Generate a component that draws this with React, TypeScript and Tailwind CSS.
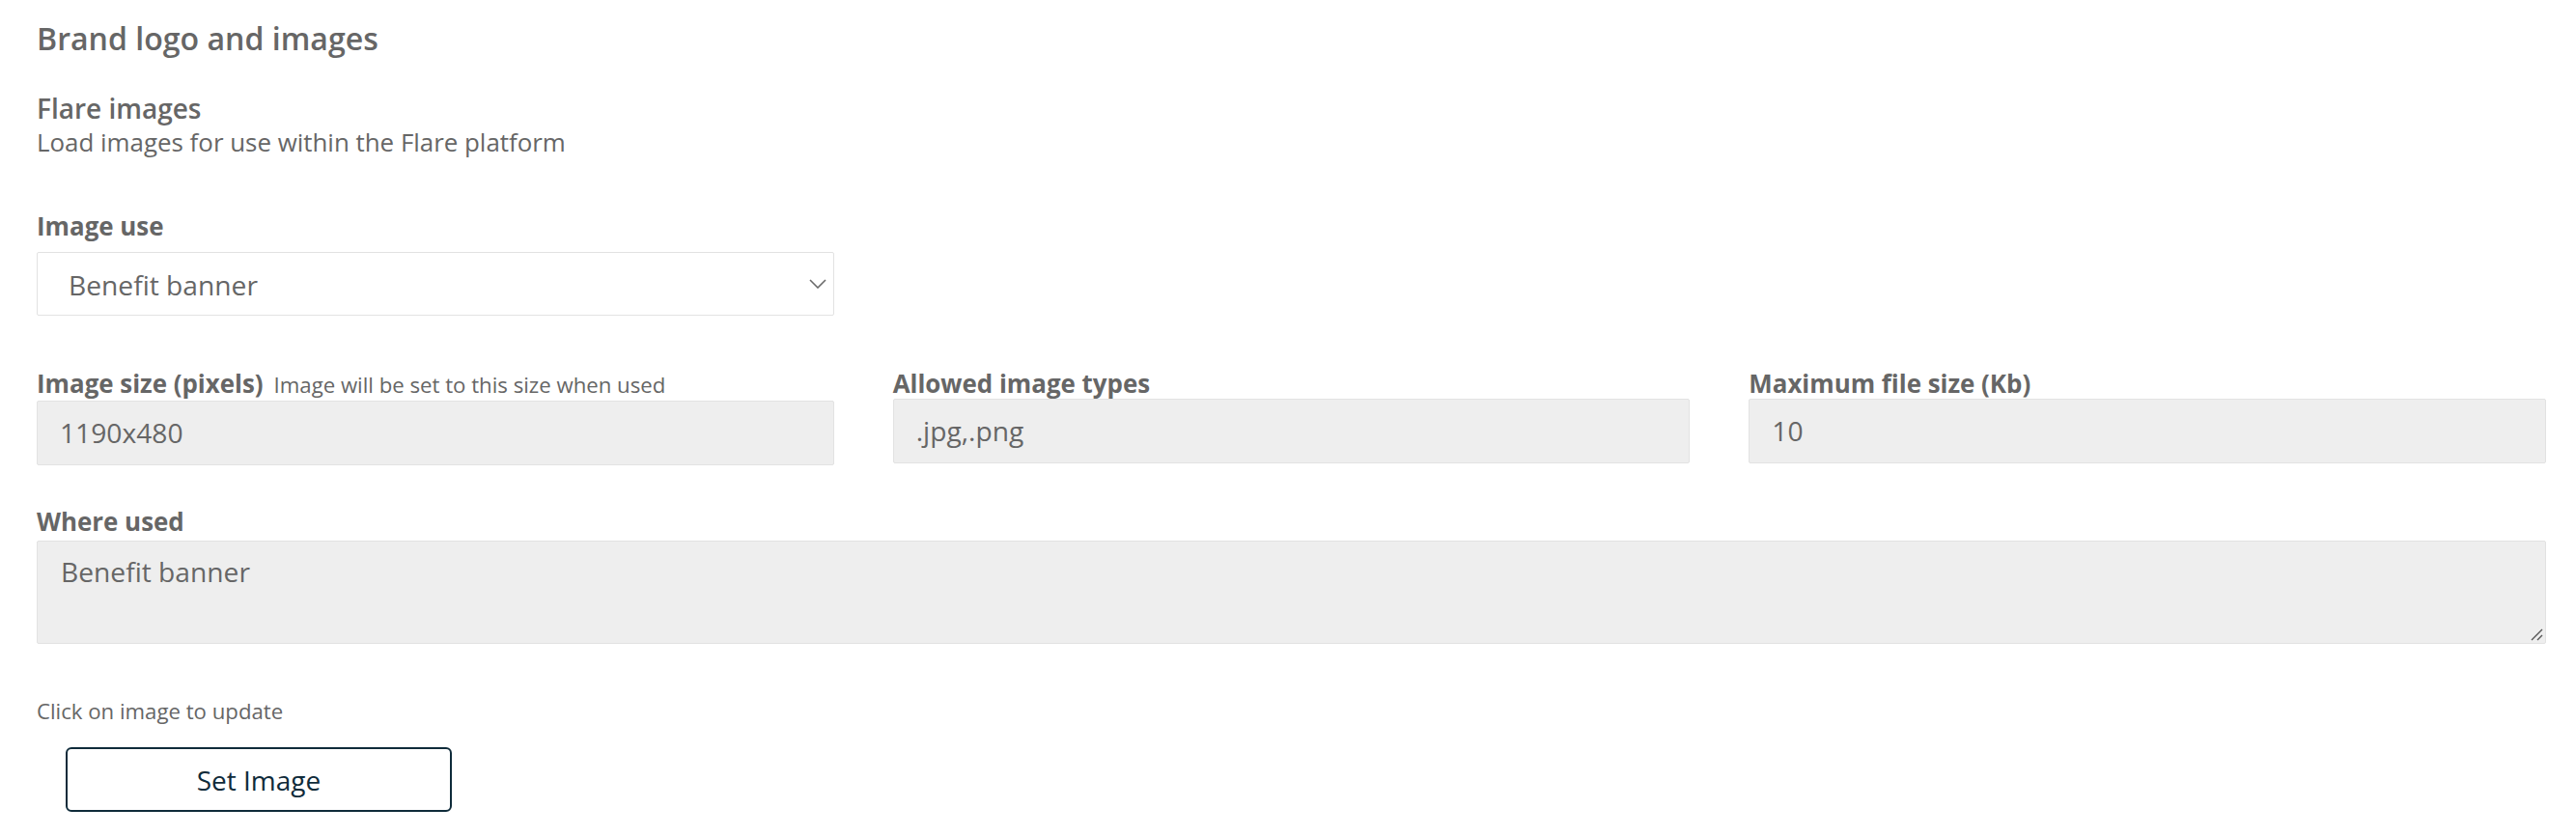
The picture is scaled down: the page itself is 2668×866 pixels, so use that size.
import React from "react";

const font = { fontFamily: '"Open Sans", "Noto Sans", sans-serif' };

function Field({ label, value, extra }: { label: string; value: string; extra?: string }) {
  return (
    <div className="flex flex-col">
      <div className="flex items-baseline leading-[32px]">
        <span className="text-[25.9px] font-bold text-[#666666]">{label}</span>
        {extra && <span className="ml-[11px] text-[22.2px] text-[#666666]">{extra}</span>}
      </div>
      <div className="h-[67px] rounded-[2px] border border-[#e2e2e2] bg-[#eeeeee] pl-[23px] pt-[14px]">
        <div className="text-[28.2px] leading-[37px] text-[#666666]">{value}</div>
      </div>
    </div>
  );
}

export default function App() {
  return (
    <div className="min-h-[866px] w-full bg-white" style={font}>
      <div className="flex flex-col pl-[38px] pr-[31px] pt-[19px]">
        <h1 className="text-[32.1px] font-semibold leading-[42px] text-[#666666]">Brand logo and images</h1>
        <h2 className="mt-[33px] text-[28px] font-semibold leading-[36px] text-[#666666]">Flare images</h2>
        <p className="mt-[1px] text-[25.9px] leading-[32px] text-[#666666]">Load images for use within the Flare platform</p>

        <div className="mt-[55px] text-[25.9px] font-bold leading-[32px] text-[#666666]">Image use</div>
        <div className="mt-[11px] flex h-[66px] w-[826px] items-start justify-between rounded-[2px] border border-[#e2e2e2] bg-white pl-[32px] pr-[7px] pt-[15px]">
          <span className="text-[28.2px] leading-[37px] text-[#666666]">Benefit banner</span>
          <svg width="18" height="10" viewBox="0 0 18 10" className="mt-[12px]" fill="none">
            <path d="M1 1 L9 9 L17 1" stroke="#6a6a6a" strokeWidth="1.6" />
          </svg>
        </div>

        <div className="mt-[54px] grid grid-cols-3 gap-x-[61px]">
          <Field label="Image size (pixels)" extra="Image will be set to this size when used" value="1190x480" />
          <Field label="Allowed image types" value=".jpg,.png" />
          <Field label="Maximum file size (Kb)" value="10" />
        </div>

        <div className="mt-[42px] text-[25.9px] font-bold leading-[32px] text-[#666666]">Where used</div>
        <div className="relative mt-[4px] h-[107px] rounded-[2px] border border-[#e2e2e2] bg-[#eeeeee] pl-[24px] pt-[13px]">
          <div className="text-[28.2px] leading-[37px] text-[#666666]">Benefit banner</div>
          <svg width="14" height="14" viewBox="0 0 14 14" className="absolute bottom-[2px] right-[2px]" fill="none">
            <path d="M2 13 L13 2 M8 13 L13 8" stroke="#555555" strokeWidth="1.4" />
          </svg>
        </div>

        <div className="mt-[56px] text-[22.2px] leading-[28px] text-[#666666]">Click on image to update</div>
        <button className="ml-[30px] mt-[23px] flex h-[67px] w-[400px] items-center justify-center rounded-[6px] border-2 border-[#0f2b3a] bg-white text-[28px] text-[#0f2b3a]">
          Set Image
        </button>
      </div>
    </div>
  );
}
